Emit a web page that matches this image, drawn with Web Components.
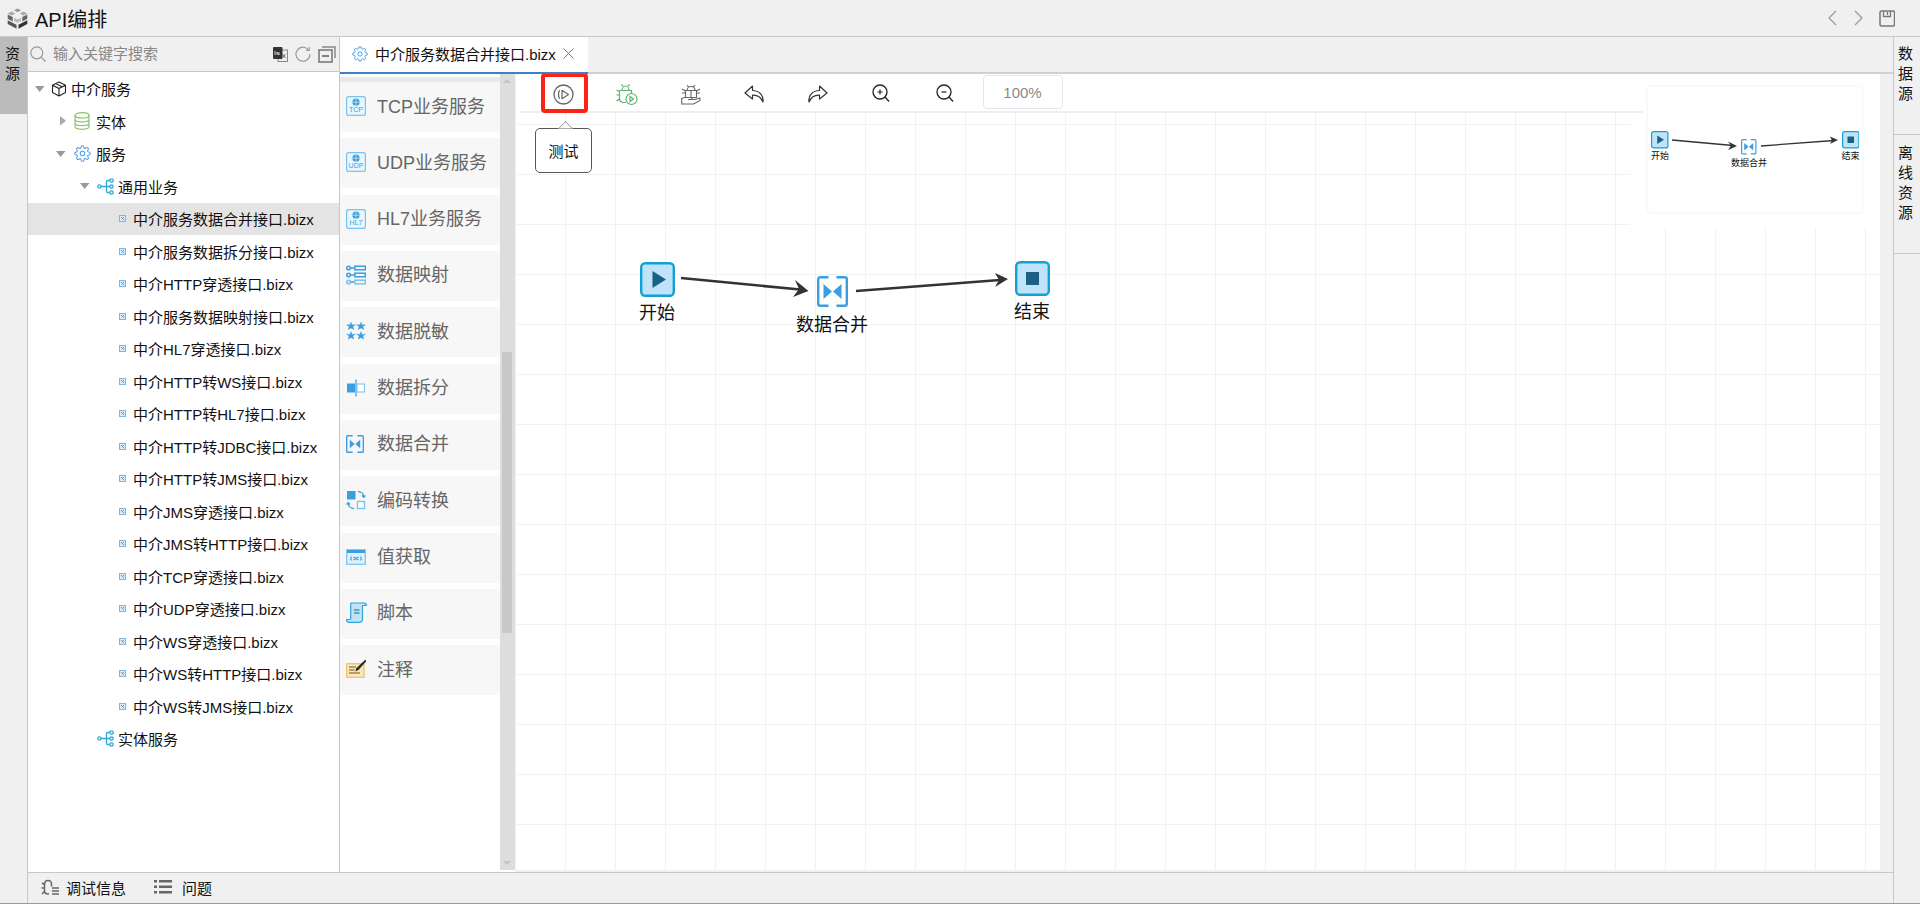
<!DOCTYPE html>
<html lang="zh">
<head>
<meta charset="utf-8">
<title>API编排</title>
<style>
  html, body { margin: 0; height: 100%; background: #f0f0f0; overflow: hidden; }
  body { font-family: "Liberation Sans", "Noto Sans CJK SC", sans-serif; color: #111; }
</style>
</head>
<body>
<api-shell>
  <app-header slot="header" title="API编排"></app-header>
  <rail-tab slot="left" active pad="7">资源</rail-tab>

  <resource-panel slot="tree">
    <tree-row level="0" arrow="down" icon="cube">中介服务</tree-row>
    <tree-row level="1" arrow="right" icon="db">实体</tree-row>
    <tree-row level="1" arrow="down" icon="gear">服务</tree-row>
    <tree-row level="2" arrow="down" icon="branch">通用业务</tree-row>
    <tree-row level="3" icon="leaf" selected>中介服务数据合并接口.bizx</tree-row>
    <tree-row level="3" icon="leaf">中介服务数据拆分接口.bizx</tree-row>
    <tree-row level="3" icon="leaf">中介HTTP穿透接口.bizx</tree-row>
    <tree-row level="3" icon="leaf">中介服务数据映射接口.bizx</tree-row>
    <tree-row level="3" icon="leaf">中介HL7穿透接口.bizx</tree-row>
    <tree-row level="3" icon="leaf">中介HTTP转WS接口.bizx</tree-row>
    <tree-row level="3" icon="leaf">中介HTTP转HL7接口.bizx</tree-row>
    <tree-row level="3" icon="leaf">中介HTTP转JDBC接口.bizx</tree-row>
    <tree-row level="3" icon="leaf">中介HTTP转JMS接口.bizx</tree-row>
    <tree-row level="3" icon="leaf">中介JMS穿透接口.bizx</tree-row>
    <tree-row level="3" icon="leaf">中介JMS转HTTP接口.bizx</tree-row>
    <tree-row level="3" icon="leaf">中介TCP穿透接口.bizx</tree-row>
    <tree-row level="3" icon="leaf">中介UDP穿透接口.bizx</tree-row>
    <tree-row level="3" icon="leaf">中介WS穿透接口.bizx</tree-row>
    <tree-row level="3" icon="leaf">中介WS转HTTP接口.bizx</tree-row>
    <tree-row level="3" icon="leaf">中介WS转JMS接口.bizx</tree-row>
    <tree-row level="2" icon="branch">实体服务</tree-row>
  </resource-panel>

  <editor-tabs slot="tabs" label="中介服务数据合并接口.bizx"></editor-tabs>

  <palette-panel slot="palette">
    <palette-item icon="tcp">TCP业务服务</palette-item>
    <palette-item icon="udp">UDP业务服务</palette-item>
    <palette-item icon="hl7">HL7业务服务</palette-item>
    <palette-item icon="map">数据映射</palette-item>
    <palette-item icon="mask">数据脱敏</palette-item>
    <palette-item icon="split">数据拆分</palette-item>
    <palette-item icon="merge">数据合并</palette-item>
    <palette-item icon="code">编码转换</palette-item>
    <palette-item icon="value">值获取</palette-item>
    <palette-item icon="script">脚本</palette-item>
    <palette-item icon="note">注释</palette-item>
  </palette-panel>

  <flow-canvas slot="canvas"></flow-canvas>

  <status-bar slot="status"></status-bar>

  <rail-tab slot="right" pad="7" h="98" border>数据源</rail-tab>
  <rail-tab slot="right" pad="8" h="119" border>离线资源</rail-tab>
</api-shell>

<script>
const FONT = '"Liberation Sans", "Noto Sans CJK SC", sans-serif';
const BLUE = "#3a9fe0";
const LIGHT = "#7cc2ee";

const svg = (w, h, vb, body) =>
  `<svg width="${w}" height="${h}" viewBox="${vb}" fill="none" style="display:block">${body}</svg>`;

const gearPath =
  "M19.4 15a1.65 1.65 0 0 0 .33 1.82l.06.06a2 2 0 0 1 0 2.83 2 2 0 0 1-2.83 0l-.06-.06a1.65 1.65 0 0 0-1.82-.33 1.65 1.65 0 0 0-1 1.51V21a2 2 0 0 1-2 2 2 2 0 0 1-2-2v-.09A1.65 1.65 0 0 0 9 19.4a1.65 1.65 0 0 0-1.82.33l-.06.06a2 2 0 0 1-2.83 0 2 2 0 0 1 0-2.83l.06-.06a1.65 1.65 0 0 0 .33-1.82 1.65 1.65 0 0 0-1.51-1H3a2 2 0 0 1-2-2 2 2 0 0 1 2-2h.09A1.65 1.65 0 0 0 4.6 9a1.65 1.65 0 0 0-.33-1.82l-.06-.06a2 2 0 0 1 0-2.83 2 2 0 0 1 2.83 0l.06.06a1.65 1.65 0 0 0 1.82.33H9a1.65 1.65 0 0 0 1-1.51V3a2 2 0 0 1 2-2 2 2 0 0 1 2 2v.09a1.65 1.65 0 0 0 1 1.51 1.65 1.65 0 0 0 1.82-.33l.06-.06a2 2 0 0 1 2.83 0 2 2 0 0 1 0 2.83l-.06.06a1.65 1.65 0 0 0-.33 1.82V9a1.65 1.65 0 0 0 1.51 1H21a2 2 0 0 1 2 2 2 2 0 0 1-2 2h-.09a1.65 1.65 0 0 0-1.51 1z";

const gear = (size) =>
  svg(size, size, "0 0 24 24", `<path d="${gearPath}" stroke="#4d9df0" stroke-width="1.5"/><circle cx="12" cy="12" r="3.2" stroke="#4d9df0" stroke-width="1.5"/>`);

const badge = (label) => svg(20, 20, "0 0 20 20", `
  <rect x=".6" y=".6" width="18.8" height="18.8" rx="2.2" fill="#eaf6fd" stroke="${LIGHT}" stroke-width="1.2"/>
  <circle cx="10" cy="6.2" r="3.6" fill="${BLUE}"/>
  <path d="M6.4 6.2h7.2M10 2.6v7.2" stroke="#eaf6fd" stroke-width=".6"/>
  <text x="10" y="16.4" text-anchor="middle" font-family="Liberation Sans" font-size="7" fill="${BLUE}">${label}</text>`);

const mergeGlyph = (w, h) => svg(w, h, "0 0 31 31", `
  <path d="M11.5 1.2H3.2a2 2 0 0 0-2 2v24.6a2 2 0 0 0 2 2h8.300M19.5 1.2h8.300a2 2 0 0 1 2 2v24.6a2 2 0 0 1-2 2h-8.300" stroke="${BLUE}" stroke-width="2.4"/>
  <path d="M6.500 8l8.500 7.500-8.500 7.500zM24.500 8L16 15.500l8.500 7.500z" fill="${BLUE}"/>`);

const ICONS = {
  cube: svg(16, 16, "0 0 16 16", `<path d="M8 1l6.5 3.2v7.4L8 15l-6.5-3.4V4.2zM1.5 4.2L8 7.6l6.5-3.4M8 7.6V15M4.8 2.6l6.5 3.3" stroke="#222" stroke-width="1.1" stroke-linejoin="round"/>`),
  db: svg(16, 18, "0 0 16 18", `<ellipse cx="8" cy="3.4" rx="7" ry="2.7" stroke="#8cc56e" stroke-width="1.2"/><path d="M1 3.4v11.2c0 1.5 3.1 2.7 7 2.7s7-1.2 7-2.7V3.4M1 7.2c0 1.5 3.1 2.7 7 2.7s7-1.2 7-2.7M1 11c0 1.5 3.1 2.7 7 2.7s7-1.2 7-2.7" stroke="#8cc56e" stroke-width="1.2"/>`),
  gear: gear(17),
  branch: svg(17, 17, "0 0 17 17", `<g stroke="#29abd9" stroke-width="1.3"><circle cx="2.3" cy="8.5" r="1.6"/><circle cx="14.5" cy="2.5" r="1.7"/><circle cx="14.5" cy="8.5" r="1.7"/><circle cx="14.5" cy="14.5" r="1.7"/><path d="M4 8.5h8.8M12.8 2.5H10.500a1 1 0 0 0-1 1v10a1 1 0 0 0 1 1h2.300"/></g>`),
  leaf: svg(7, 7, "0 0 7 7", `<rect x=".5" y=".5" width="6" height="6" fill="#dbeaf6" stroke="#7ab8e6"/><path d="M2 2l3 3M5 2L3.500 3.500" stroke="#3a93d5" stroke-width=".9"/>`),
  tcp: badge("TCP"),
  udp: badge("UDP"),
  hl7: badge("HL7"),
  map: svg(20, 20, "0 0 20 20", `<g stroke="${BLUE}" stroke-width="1.500"><circle cx="2.500" cy="3" r="1.800"/><circle cx="2.500" cy="10" r="1.800"/><circle cx="2.500" cy="17" r="1.800" stroke="${LIGHT}"/><path d="M4.500 3h4M4.500 10h4M4.500 17h4"/><rect x="8.800" y="1.200" width="10.500" height="3.600"/><rect x="8.800" y="8.200" width="10.500" height="3.600"/><rect x="8.800" y="15.200" width="10.500" height="3.600" stroke="${LIGHT}"/></g>`),
  mask: svg(20, 18, "0 0 20 18", `<g fill="${BLUE}" stroke="${BLUE}" stroke-width=".5"><path d="M5 .2l1 2.700 3.300-.2-2.500 1.900 1 3L5 5.900 2.200 7.600l1-3L.7 2.700 4 2.900z"/><path d="M15 .2l1 2.700 3.300-.2-2.500 1.900 1 3L15 5.900l-2.800 1.700 1-3-2.500-1.900 3.300.2z"/><path d="M5 9.700l1 2.700 3.300-.2-2.500 1.900 1 3L5 15.400l-2.800 1.700 1-3-2.500-1.900 3.300.2z"/><path d="M15 9.700l1 2.700 3.300-.2-2.500 1.900 1 3L15 15.400l-2.800 1.700 1-3-2.500-1.900 3.300.2z"/></g>`),
  split: svg(20, 18, "0 0 20 18", `<rect x="1" y="4.500" width="8" height="9" fill="${BLUE}"/><rect x="11" y="5" width="7.500" height="8" fill="#fff" stroke="${LIGHT}"/><rect x="9" y=".5" width="2" height="17" fill="${LIGHT}"/>`),
  merge: mergeGlyph(18, 18),
  code: svg(20, 20, "0 0 20 20", `<rect x="1" y="1" width="8.500" height="8.500" fill="${BLUE}"/><rect x="11.500" y="11.500" width="7" height="7" fill="#fff" stroke="${LIGHT}" stroke-width="1.400"/><path d="M12 1.500c3 0 5.500 2 5.800 5M16 5.500l1.800 1.800 1.700-1.800M8 18.500c-3 0-5.500-2-5.800-5M.5 14.500l1.700-1.800 1.800 1.800" stroke="${BLUE}" stroke-width="1.300"/>`),
  value: svg(20, 16, "0 0 20 16", `<rect x=".7" y=".7" width="18.600" height="14.600" fill="#dff0fb" stroke="${LIGHT}" stroke-width="1.200"/><rect x="1" y="1" width="18" height="3" fill="${BLUE}"/><path d="M5.500 7.500c-1 1.300-1 2.700 0 4M14.500 7.500c1 1.300 1 2.700 0 4M7.500 8l5 3M12.500 8l-5 3" stroke="${BLUE}" stroke-width="1.100"/>`),
  script: svg(21, 21, "0 0 21 21", `<path d="M5 1h13c1.500 0 2.500 1 2.500 2.500H16.500V17c0 2-1.300 3.300-3.300 3.300H3c-1.500 0-2.500-1-2.500-2.800h3c.8 0 1.200-.5 1.200-1.300V3c0-1 .4-2 .3-2z" fill="#bfe4f8" stroke="#2ea6de" stroke-width="1.200" stroke-linejoin="round"/><path d="M8 8h5.500M8 11h5.500" stroke="#1b6184" stroke-width="1.200"/>`),
  note: svg(20, 20, "0 0 20 20", `<rect x=".7" y="4.700" width="17.300" height="13.600" fill="#f8e8c0" stroke="#f0c468" stroke-width="1.300"/><path d="M3 8h7M3 11h5.500M3 14h11" stroke="#a8814a" stroke-width="1.300"/><path d="M19.500 .5l.6 2-7.600 8.600-3.200 1.500 1-3.300z" fill="#2a2a2a"/>`),
  search: svg(16, 16, "0 0 16 16", `<circle cx="6.800" cy="6.800" r="6" stroke="#999" stroke-width="1.200"/><path d="M11.200 11.200l4.300 4.300" stroke="#999" stroke-width="1.200"/>`),
  lang: svg(15, 15, "0 0 15 15", `<rect x="5" y="3" width="9.500" height="11.500" fill="#eee" stroke="#888"/><rect x="0" y="0" width="9.500" height="12" rx="1" fill="#333"/><path d="M2 4v4M4 8V5l2 3V5" stroke="#ddd" stroke-width=".9"/><path d="M9.500 7l3 4M12.500 7l-3 4" stroke="#666" stroke-width=".9"/>`),
  refresh: svg(16, 16, "0 0 16 16", `<path d="M13.800 4.300A7 7 0 1 0 15 8" stroke="#999" stroke-width="1.200"/><path d="M11 4.500h3.300V1" stroke="#999" stroke-width="1.100"/>`),
  collapse: svg(18, 17, "0 0 18 17", `<rect x="1" y="4" width="13" height="12" stroke="#888" stroke-width="1.800"/><path d="M4 1h13v11" stroke="#888" stroke-width="1.500"/><path d="M4 10h7" stroke="#777" stroke-width="1.800"/>`),
  test: svg(21, 21, "0 0 21 21", `<circle cx="10.500" cy="10.500" r="9.500" stroke="#666" stroke-width="1.300"/><path d="M9 6.300L15.500 10.500 9 14.700z" stroke="#666" stroke-width="1.200" stroke-linejoin="round"/><path d="M6.500 6.300c-1.300 2.700-1.300 5.700 0 8.400" stroke="#666" stroke-width="1.300"/>`),
  bugPlay: svg(22, 22, "0 0 22 22", `<g stroke="#5cb270" stroke-width="1.200"><path d="M6 6.500c0-2.500 1.700-4.500 3.500-4.500S13 4 13 6.500zM3.500 6.500h12v5M3.500 6.500v8c0 2.500 2 4 4.500 4h2M7 2L5.500 .5M12 2l1.500-1.500M.5 11h3M.5 6l3 1.500M.5 17l3-2"/><circle cx="15.500" cy="15" r="5.500" fill="#fff"/><path d="M14 12.500l3.500 2.500-3.500 2.500z"/></g>`),
  bugHand: svg(20, 20, "0 0 20 20", `<g stroke="#666" stroke-width="1.100"><path d="M6 5.500C6 3 7.700 1.500 10 1.500s4 1.500 4 4zM4.500 5.500h11v7h-11zM7.500 1.500L6 .3M12.500 1.500L14 .3M1 8h3.500M15.500 8H19M1 4l3.500 2M19 4l-3.500 2M10 5.500v7"/><path d="M.7 13.500l3-1h6.500c1 0 1 2 0 2H7h7l5-1.500v2.500l-6.500 3.500H.7z" fill="#fff"/></g>`),
  undo: svg(21, 18, "0 0 21 18", `<path d="M8.500 1L1 8l7.500 6V10.200c4.500-.3 8 1.200 10.500 6.800.8-6.500-3.500-11.500-10.500-11.500z" stroke="#333" stroke-width="1.200" stroke-linejoin="round"/>`),
  redo: svg(21, 18, "0 0 21 18", `<path d="M12.500 1L20 8l-7.500 6V10.200C8 9.900 4.500 11.400 2 17 1.200 10.500 5.500 5.500 12.500 5.500z" stroke="#333" stroke-width="1.200" stroke-linejoin="round"/>`),
  zoomIn: svg(18, 18, "0 0 18 18", `<circle cx="8" cy="8" r="7" stroke="#222" stroke-width="1.300"/><path d="M13 13l4 4.500" stroke="#222" stroke-width="1.300"/><path d="M5.500 8h5M8 5.500v5" stroke="#222" stroke-width="1.200"/>`),
  zoomOut: svg(18, 18, "0 0 18 18", `<circle cx="8" cy="8" r="7" stroke="#222" stroke-width="1.300"/><path d="M13 13l4 4.500" stroke="#222" stroke-width="1.300"/><path d="M5.500 8h5" stroke="#222" stroke-width="1.200"/>`),
  debug: svg(18, 17, "0 0 18 17", `<g stroke="#666" stroke-width="1.500"><path d="M3.500 5.500c0-2.500 1.500-4 3.500-4s3.500 1.500 3.500 4v2M3.500 5.500v6c0 2 1.500 3.500 3.500 3.500h1M3.500 9H.5M1 4l2.500 1.500M1 15l2.500-2.500M11 9h7M11 12h7M11 15h7"/></g>`),
  list: svg(18, 14, "0 0 18 14", `<g fill="#666"><rect x="0" y="0" width="3" height="2.500"/><rect x="0" y="5.500" width="3" height="2.500"/><rect x="0" y="11" width="3" height="2.500"/><rect x="5" y="0" width="13" height="2.500"/><rect x="5" y="5.500" width="13" height="2.500"/><rect x="5" y="11" width="13" height="2.500"/></g>`),
};

class ApiShell extends HTMLElement {
  constructor() {
    super();
    this.attachShadow({ mode: "open" });
  }

  connectedCallback() {
    this.shadowRoot.innerHTML = `
      <style>
        :host {
          display: flex;
          flex-direction: column;
          height: 100vh;
          box-sizing: border-box;
          border-bottom: 1px solid #999;
          background: #f0f0f0;
          font-family: ${FONT};
        }
        .body { flex: 1; display: flex; min-height: 0; border-top: 1px solid #c8c8c8; }
        .left { width: 27px; border-right: 1px solid #c8c8c8; flex: none; }
        .right { width: 26px; border-left: 1px solid #c8c8c8; flex: none; }
        .center { flex: 1; display: flex; flex-direction: column; min-width: 0; }
        .work { flex: 1; display: flex; min-height: 0; }
        .main { flex: 1; display: flex; flex-direction: column; min-width: 0; }
        .content { flex: 1; display: flex; min-height: 0; }
      </style>
      <slot name="header"></slot>
      <div class="body">
        <div class="left"><slot name="left"></slot></div>
        <div class="center">
          <div class="work">
            <slot name="tree"></slot>
            <div class="main">
              <slot name="tabs"></slot>
              <div class="content">
                <slot name="palette"></slot>
                <slot name="canvas"></slot>
              </div>
            </div>
          </div>
          <slot name="status"></slot>
        </div>
        <div class="right"><slot name="right"></slot></div>
      </div>
    `;
  }
}

class AppHeader extends HTMLElement {
  constructor() {
    super();
    this.attachShadow({ mode: "open" });
  }

  connectedCallback() {
    this.shadowRoot.innerHTML = `
      <style>
        :host {
          display: flex;
          align-items: center;
          height: 36px;
          flex: none;
          padding: 0 25px 0 7px;
          font-size: 20px;
          color: #111;
        }
        .logo { margin-right: 7px; }
        .title { flex: 1; }
        .nav { display: flex; align-items: center; }
      </style>
      <div class="logo">${svg(21, 21, "0 0 21 21", `
        <path d="M10.500 .5l3.500 1.800-3.500 1.900L7 2.300z" fill="#999"/>
        <path d="M.7 5.500l3.800-1.900 3.800 1.900-3.800 1.900zM12.700 5.500l3.800-1.900 3.800 1.900-3.800 1.900z" fill="#aaa"/>
        <path d="M.7 6.500l5 2.600v4.400l-5-2.700zM15.300 9.100l5-2.600v4.300l-5 2.700z" fill="#666"/>
        <path d="M7 9.700l3.500 1.800 3.500-1.800v3.300l-3.500 1.800L7 13z" fill="#bbb"/>
        <path d="M.7 12.300l8.800 4.400v4L.7 16z" fill="#555"/>
        <path d="M20.300 12.300l-8.800 4.400v4l8.800-4.700z" fill="#333"/>`)}</div>
      <div class="title">${this.getAttribute("title")}</div>
      <div class="nav">
        ${svg(9, 16, "0 0 9 16", `<path d="M8 1L1 8l7 7" stroke="#999" stroke-width="1.200"/>`)}
        <div style="width:17px"></div>
        ${svg(9, 16, "0 0 9 16", `<path d="M1 1l7 7-7 7" stroke="#999" stroke-width="1.200"/>`)}
        <div style="width:16px"></div>
        ${svg(16, 17, "0 0 16 17", `<rect x="1" y="1" width="14.500" height="15" rx="1.500" stroke="#777" stroke-width="1.500"/><path d="M4.500 1v5.500h7V1M8.500 2v3" stroke="#777" stroke-width="1.300"/>`)}
      </div>
    `;
    this.removeAttribute("title");
  }
}

class RailTab extends HTMLElement {
  constructor() {
    super();
    this.attachShadow({ mode: "open" });
  }

  connectedCallback() {
    const pad = this.getAttribute("pad") || 7;
    const h = this.getAttribute("h") || 77;
    const bg = this.hasAttribute("active") ? "#bbb" : "transparent";
    const line = this.hasAttribute("border") ? "border-bottom: 1px solid #c8c8c8;" : "";
    const left = this.hasAttribute("border") ? 4 : 5;
    this.shadowRoot.innerHTML = `
      <style>
        :host {
          display: block;
          box-sizing: border-box;
          height: ${h}px;
          padding: ${pad}px 0 0 ${left}px;
          background: ${bg};
          ${line}
        }
        div { width: 15px; font-size: 15px; line-height: 20px; color: #111; word-break: break-all; }
      </style>
      <div><slot></slot></div>
    `;
  }
}

class ResourcePanel extends HTMLElement {
  constructor() {
    super();
    this.attachShadow({ mode: "open" });
  }

  connectedCallback() {
    this.shadowRoot.innerHTML = `
      <style>
        :host {
          display: flex;
          flex-direction: column;
          flex: none;
          width: 312px;
          box-sizing: border-box;
          border-right: 1px solid #c8c8c8;
        }
        .search {
          height: 35px;
          flex: none;
          box-sizing: border-box;
          display: flex;
          align-items: center;
          padding: 0 3px 0 2px;
          border-bottom: 1px solid #c8c8c8;
          color: #888;
          font-size: 15px;
        }
        .hint { flex: 1; margin-left: 7px; line-height: 20px; }
        .tools { display: flex; align-items: center; gap: 7px; }
        .tree { flex: 1; background: #fff; padding-top: .5px; overflow: hidden; }
      </style>
      <div class="search">
        ${ICONS.search}
        <span class="hint">输入关键字搜索</span>
        <span class="tools">${ICONS.lang}${ICONS.refresh}${ICONS.collapse}</span>
      </div>
      <div class="tree"><slot></slot></div>
    `;
  }
}

class TreeRow extends HTMLElement {
  constructor() {
    super();
    this.attachShadow({ mode: "open" });
  }

  connectedCallback() {
    const level = +this.getAttribute("level");
    const icon = this.getAttribute("icon");
    const arrow = this.getAttribute("arrow");
    const arrowX = [40, 61, 85][level] || 0;
    const iconX = [59, 82, 105, 122][level];
    const textX = [71, 96, 118, 133][level];
    const iconW = { cube: 16, db: 16, gear: 17, branch: 17, leaf: 7 }[icon];
    const iconLeft = iconX - iconW / 2 - 28;
    const arrowW = arrowX ? arrowX - 28 + 5 : 0;

    let arrowSvg = "";
    if (arrow === "down") {
      arrowSvg = svg(10, 6, "0 0 10 6", `<path d="M0 0h9.500L4.700 6z" fill="#999"/>`);
    } else if (arrow === "right") {
      arrowSvg = svg(6, 10, "0 0 6 10", `<path d="M0 0v9.500L6 4.700z" fill="#aaa"/>`);
    }

    this.shadowRoot.innerHTML = `
      <style>
        :host {
          display: flex;
          align-items: center;
          height: 32.5px;
          font-size: 15px;
          color: #111;
          background: ${this.hasAttribute("selected") ? "#e4e4e4" : "transparent"};
          white-space: nowrap;
        }
        .arrow { flex: none; width: ${arrowW}px; display: flex; justify-content: flex-end; }
        .gap1 { flex: none; width: ${Math.max(0, iconLeft - arrowW)}px; }
        .icon { flex: none; width: ${iconW}px; }
        .gap2 { flex: none; width: ${textX - 28 - iconLeft - iconW}px; }
      </style>
      <div class="arrow">${arrowSvg}</div>
      <div class="gap1"></div>
      <div class="icon">${ICONS[icon]}</div>
      <div class="gap2"></div>
      <slot></slot>
    `;
  }
}

class EditorTabs extends HTMLElement {
  constructor() {
    super();
    this.attachShadow({ mode: "open" });
  }

  connectedCallback() {
    this.shadowRoot.innerHTML = `
      <style>
        :host {
          display: flex;
          flex: none;
          height: 37px;
          box-sizing: border-box;
          border-bottom: 2px solid #d0d0d0;
        }
        .tab {
          display: flex;
          align-items: center;
          width: 248px;
          height: 37px;
          box-sizing: border-box;
          padding: 0 0 2px 12px;
          background: #fff;
          border-bottom: 2px solid #3f7fc4;
          font-size: 15px;
          color: #111;
        }
        .label { margin: 0 7px 0 7px; white-space: nowrap; }
      </style>
      <div class="tab">
        ${gear(16)}
        <span class="label">${this.getAttribute("label")}</span>
        ${svg(11, 11, "0 0 11 11", `<path d="M.5.5l10 10M10.500.5l-10 10" stroke="#777" stroke-width="1"/>`)}
      </div>
    `;
  }
}

class PalettePanel extends HTMLElement {
  constructor() {
    super();
    this.attachShadow({ mode: "open" });
  }

  connectedCallback() {
    this.shadowRoot.innerHTML = `
      <style>
        :host { display: flex; flex: none; width: 175px; background: #fff; }
        .list {
          width: 160px;
          box-sizing: border-box;
          padding-top: 8px;
          display: flex;
          flex-direction: column;
          gap: 6.33px;
          background: linear-gradient(#fff 3px, #e9e9e9 3px, #e9e9e9 8px, #fff 8px);
        }
        .bar { width: 15px; display: flex; flex-direction: column; align-items: center; background: #ddd; position: relative; height: 796px; }
        .thumb { width: 10px; height: 281px; margin: 278px 1px 0 0; background: #c8c8c8; }
        .up, .down { position: absolute; left: 3px; width: 0; height: 0; border-left: 4px solid transparent; border-right: 4px solid transparent; }
        .up { top: 5px; border-bottom: 4px solid #c4c4c4; }
        .down { bottom: 5px; border-top: 4px solid #c4c4c4; }
      </style>
      <div class="list"><slot></slot></div>
      <div class="bar"><i class="up"></i><div class="thumb"></div><i class="down"></i></div>
    `;
  }
}

class PaletteItem extends HTMLElement {
  constructor() {
    super();
    this.attachShadow({ mode: "open" });
  }

  connectedCallback() {
    const icon = this.getAttribute("icon");
    this.shadowRoot.innerHTML = `
      <style>
        :host {
          display: flex;
          align-items: center;
          height: 50px;
          box-sizing: border-box;
          padding: 0 0 2px 6px;
          background: #f7f7f7;
          color: #666;
          font-size: 18px;
          white-space: nowrap;
        }
        .icon { width: 31px; flex: none; }
        .text { margin-bottom: 3px; }
      </style>
      <div class="icon">${ICONS[icon]}</div>
      <div class="text"><slot></slot></div>
    `;
  }
}

class FlowNode extends HTMLElement {
  constructor() {
    super();
    this.attachShadow({ mode: "open" });
  }

  connectedCallback() {
    const kind = this.getAttribute("kind");
    const z = this.getAttribute("z") || 1;
    let glyph;
    if (kind === "merge") {
      glyph = mergeGlyph(31, 31);
    } else {
      const inner = kind === "start"
        ? `<path d="M12.500 9L26 17.500 12.500 26z" fill="#1b6184"/>`
        : `<rect x="11" y="11" width="13" height="13" fill="#1b6184"/>`;
      glyph = svg(35, 35, "0 0 35 35", `<rect x="1.200" y="1.200" width="32.600" height="32.600" rx="4" fill="#bfe4fa" stroke="#12a0d7" stroke-width="2.400"/>${inner}`);
    }
    this.shadowRoot.innerHTML = `
      <style>
        :host {
          position: absolute;
          left: ${this.getAttribute("x")}px;
          top: ${this.getAttribute("y")}px;
          transform: translateX(-50%);
        }
        .wrap { zoom: ${z}; display: flex; flex-direction: column; align-items: center; }
        .label { font-size: 18px; line-height: 22px; margin-top: ${kind === "merge" ? 7 : 5}px; color: #111; white-space: nowrap; }
      </style>
      <div class="wrap">${glyph}<div class="label">${this.getAttribute("label")}</div></div>
    `;
  }
}

class FlowCanvas extends HTMLElement {
  constructor() {
    super();
    this.attachShadow({ mode: "open" });
  }

  connectedCallback() {
    const tools = [ICONS.test, ICONS.bugPlay, ICONS.bugHand, ICONS.undo, ICONS.redo, ICONS.zoomIn, ICONS.zoomOut];
    this.shadowRoot.innerHTML = `
      <style>
        :host { display: flex; flex: 1; min-width: 0; padding: 0 13px 2px 0; }
        .paper {
          flex: 1;
          position: relative;
          overflow: hidden;
          background-color: #fff;
          background-image:
            linear-gradient(#f2f2f4 1px, transparent 1px),
            linear-gradient(90deg, #f2f2f4 1px, transparent 1px);
          background-size: 50px 50px;
        }
        .toolbar {
          position: relative;
          z-index: 2;
          margin-left: 6px;
          width: 1122px;
          height: 39px;
          box-sizing: border-box;
          padding: 4px 0 0 11px;
          background: #fff;
          border-bottom: 2px solid #eee;
          display: flex;
          align-items: center;
        }
        .tool { width: 63.5px; flex: none; display: flex; justify-content: center; }
        .tool:nth-child(n+4) { margin-top: -2px; }
        .tool:nth-child(n+6) { margin-top: -4px; }
        .pct {
          margin: 0 0 5px 6px;
          width: 80px;
          height: 34px;
          box-sizing: border-box;
          border: 1px solid #e4e6ea;
          border-radius: 4px;
          display: flex;
          align-items: center;
          justify-content: center;
          font-size: 15px;
          color: #888;
        }
        .mark {
          position: absolute;
          z-index: 3;
          left: 26px;
          top: -1px;
          width: 47px;
          height: 40px;
          box-sizing: border-box;
          border: 4px solid #ff2114;
          border-radius: 4px;
        }
        .tip {
          position: absolute;
          z-index: 3;
          left: 20px;
          top: 54px;
          width: 57px;
          height: 45px;
          box-sizing: border-box;
          border: 1px solid #555;
          border-radius: 5px;
          background: #fff;
          display: flex;
          align-items: center;
          justify-content: center;
          font-size: 15px;
          color: #111;
        }
        .tip::before {
          content: "";
          position: absolute;
          left: 24px;
          top: -6px;
          width: 10px;
          height: 10px;
          background: #fff;
          border-left: 1px solid #999;
          border-top: 1px solid #999;
          transform: rotate(45deg);
          clip-path: polygon(0 0, 100% 0, 0 100%);
        }
        .edges { position: absolute; left: 0; top: 0; }
        .cover { position: absolute; z-index: 1; left: 1115px; top: 0; width: 250px; height: 153px; background: #fff; }
        .mini {
          position: absolute;
          left: 18px;
          top: 13px;
          width: 214px;
          height: 125px;
          background: #fff;
          box-shadow: 0 0 3px rgba(0,0,0,.08);
        }
      </style>
      <div class="paper">
        <div class="toolbar">
          ${tools.map((t) => `<div class="tool">${t}</div>`).join("")}
          <div class="pct">100%</div>
        </div>
        <div class="mark"></div>
        <div class="tip">测试</div>
        ${svg(1365, 796, "515 74 1365 796", `
          <path d="M681 278L800 289.500" stroke="#333" stroke-width="2.600"/>
          <path d="M808.500 291L795 280 799 289 793 297z" fill="#333"/>
          <path d="M856 291L1000 280" stroke="#333" stroke-width="2.600"/>
          <path d="M1008 279L995 273 999 280 995 287z" fill="#333"/>`).replace("<svg", '<svg class="edges"')}
        <flow-node kind="start" label="开始" x="142" y="188"></flow-node>
        <flow-node kind="merge" label="数据合并" x="317" y="202"></flow-node>
        <flow-node kind="end" label="结束" x="517" y="187"></flow-node>
        <div class="cover">
          <div class="mini">
            ${svg(214, 125, "1648 87 214 125", `
              <path d="M1672 140L1733 145.500" stroke="#333" stroke-width="1.300"/>
              <path d="M1737 146L1728 141.500 1731 145.500 1728 150z" fill="#333"/>
              <path d="M1761 146L1834 140.500" stroke="#333" stroke-width="1.300"/>
              <path d="M1838 140L1830 136.500 1832 140.500 1830 144z" fill="#333"/>`).replace("<svg", '<svg class="edges"')}
            <flow-node kind="start" label="开始" x="12" y="44" z="0.5"></flow-node>
            <flow-node kind="merge" label="数据合并" x="101" y="52" z="0.5"></flow-node>
            <flow-node kind="end" label="结束" x="202.500" y="44" z="0.5"></flow-node>
          </div>
        </div>
      </div>
    `;
  }
}

class StatusBar extends HTMLElement {
  constructor() {
    super();
    this.attachShadow({ mode: "open" });
  }

  connectedCallback() {
    this.shadowRoot.innerHTML = `
      <style>
        :host {
          display: flex;
          align-items: center;
          flex: none;
          height: 30px;
          box-sizing: content-box;
          border-top: 1px solid #c8c8c8;
          padding-left: 13px;
          font-size: 15px;
          color: #111;
        }
        .row { display: flex; align-items: center; margin-top: -2px; }
        span { margin-left: 7px; }
        .second { margin-left: 28px; display: flex; align-items: center; }
        .second span { margin-left: 10px; }
      </style>
      <div class="row">
        ${ICONS.debug}<span>调试信息</span>
        <div class="second">${ICONS.list}<span>问题</span></div>
      </div>
    `;
  }
}

customElements.define("api-shell", ApiShell);
customElements.define("app-header", AppHeader);
customElements.define("rail-tab", RailTab);
customElements.define("resource-panel", ResourcePanel);
customElements.define("tree-row", TreeRow);
customElements.define("editor-tabs", EditorTabs);
customElements.define("palette-panel", PalettePanel);
customElements.define("palette-item", PaletteItem);
customElements.define("flow-node", FlowNode);
customElements.define("flow-canvas", FlowCanvas);
customElements.define("status-bar", StatusBar);
</script>
</body>
</html>
